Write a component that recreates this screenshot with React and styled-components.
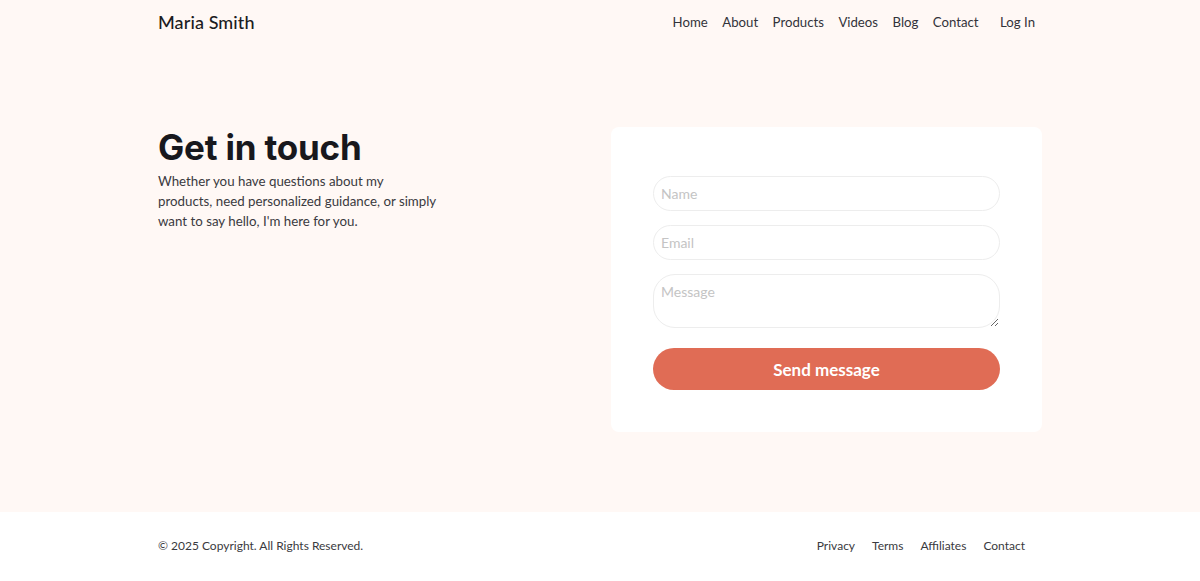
import React from "react";
import styled, { createGlobalStyle } from "styled-components";

const Global = createGlobalStyle`
  html, body { margin: 0; padding: 0; }
  body { background: #fff8f5; font-family: "Lato", "Noto Sans", sans-serif; color: #2a2a30; }
  * { box-sizing: border-box; }
`;

const Page = styled.div`
  min-height: 581px;
  display: flex;
  flex-direction: column;
`;

const Container = styled.div`
  width: 884px;
  margin: 0 auto;
`;

const Header = styled.header`
  background: #fff8f5;
`;

const NavBar = styled(Container)`
  height: 43px;
  display: flex;
  align-items: center;
  justify-content: space-between;
`;

const Brand = styled.div`
  font-size: 18px;
  font-weight: 500;
  color: #1c1c22;
  letter-spacing: 0.1px;
`;

const NavLinks = styled.nav`
  display: flex;
  align-items: center;
  gap: 14.5px;
  padding-right: 7px;
`;

const NavLink = styled.a`
  font-size: 13.2px;
  color: #33333a;
  text-decoration: none;
  margin-left: ${(p) => (p.$spaced ? "7px" : "0")};
`;

const Main = styled.main`
  flex: 1;
  background: #fff8f5;
`;

const Hero = styled(Container)`
  display: flex;
  justify-content: space-between;
  align-items: flex-start;
  padding-top: 84px;
  padding-bottom: 80px;
`;

const Intro = styled.div`
  width: 282px;
`;

const Title = styled.h1`
  margin: 0;
  font-family: "Inter", "Noto Sans", sans-serif;
  font-weight: 700;
  font-size: 35px;
  line-height: 40px;
  color: #18181d;
  letter-spacing: -0.2px;
`;

const Lead = styled.p`
  margin: 4px 0 0;
  font-size: 13.3px;
  line-height: 20px;
  color: #3a3a40;
`;

const Card = styled.form`
  width: 431px;
  background: #ffffff;
  border-radius: 8px;
  padding: 49px 42px 42px;
  display: flex;
  flex-direction: column;
`;

const Field = styled.input`
  height: 35px;
  width: 100%;
  border: 1.5px solid #ededed;
  border-radius: 18px;
  padding: 0 7px;
  font-family: inherit;
  font-size: 14px;
  color: #333;
  background: #fff;
  margin-bottom: 14px;
  outline: none;
  &::placeholder { color: #c4c4c4; }
`;

const Area = styled.textarea`
  height: 54px;
  width: 100%;
  border: 1.5px solid #ededed;
  border-radius: 22px;
  padding: 8px 7px;
  font-family: inherit;
  font-size: 14px;
  color: #333;
  resize: vertical;
  outline: none;
  margin-bottom: 20px;
  display: block;
  &::placeholder { color: #c4c4c4; }
`;

const Button = styled.button`
  height: 42px;
  width: 100%;
  border: none;
  border-radius: 21px;
  background: #e06c55;
  color: #fff;
  font-family: inherit;
  font-size: 17px;
  font-weight: 700;
  cursor: pointer;
`;

const Footer = styled.footer`
  background: #ffffff;
`;

const FooterBar = styled(Container)`
  height: 69px;
  display: flex;
  align-items: center;
  justify-content: space-between;
  font-size: 12px;
  color: #3a3a40;
  padding-bottom: 2px;
`;

const FooterLinks = styled.div`
  display: flex;
  gap: 17px;
  padding-right: 17px;
`;

const FooterLink = styled.a`
  color: #3a3a40;
  text-decoration: none;
  font-size: 12px;
`;

export default function App() {
  return (
    <Page>
      <Global />
      <Header>
        <NavBar>
          <Brand>Maria Smith</Brand>
          <NavLinks>
            <NavLink href="#">Home</NavLink>
            <NavLink href="#">About</NavLink>
            <NavLink href="#">Products</NavLink>
            <NavLink href="#">Videos</NavLink>
            <NavLink href="#">Blog</NavLink>
            <NavLink href="#">Contact</NavLink>
            <NavLink href="#" $spaced>Log In</NavLink>
          </NavLinks>
        </NavBar>
      </Header>
      <Main>
        <Hero>
          <Intro>
            <Title>Get in touch</Title>
            <Lead>
              Whether you have questions about my products, need personalized
              guidance, or simply want to say hello, I'm here for you.
            </Lead>
          </Intro>
          <Card onSubmit={(e) => e.preventDefault()}>
            <Field type="text" placeholder="Name" />
            <Field type="email" placeholder="Email" />
            <Area placeholder="Message" />
            <Button type="submit">Send message</Button>
          </Card>
        </Hero>
      </Main>
      <Footer>
        <FooterBar>
          <span>© 2025 Copyright. All Rights Reserved.</span>
          <FooterLinks>
            <FooterLink href="#">Privacy</FooterLink>
            <FooterLink href="#">Terms</FooterLink>
            <FooterLink href="#">Affiliates</FooterLink>
            <FooterLink href="#">Contact</FooterLink>
          </FooterLinks>
        </FooterBar>
      </Footer>
    </Page>
  );
}
